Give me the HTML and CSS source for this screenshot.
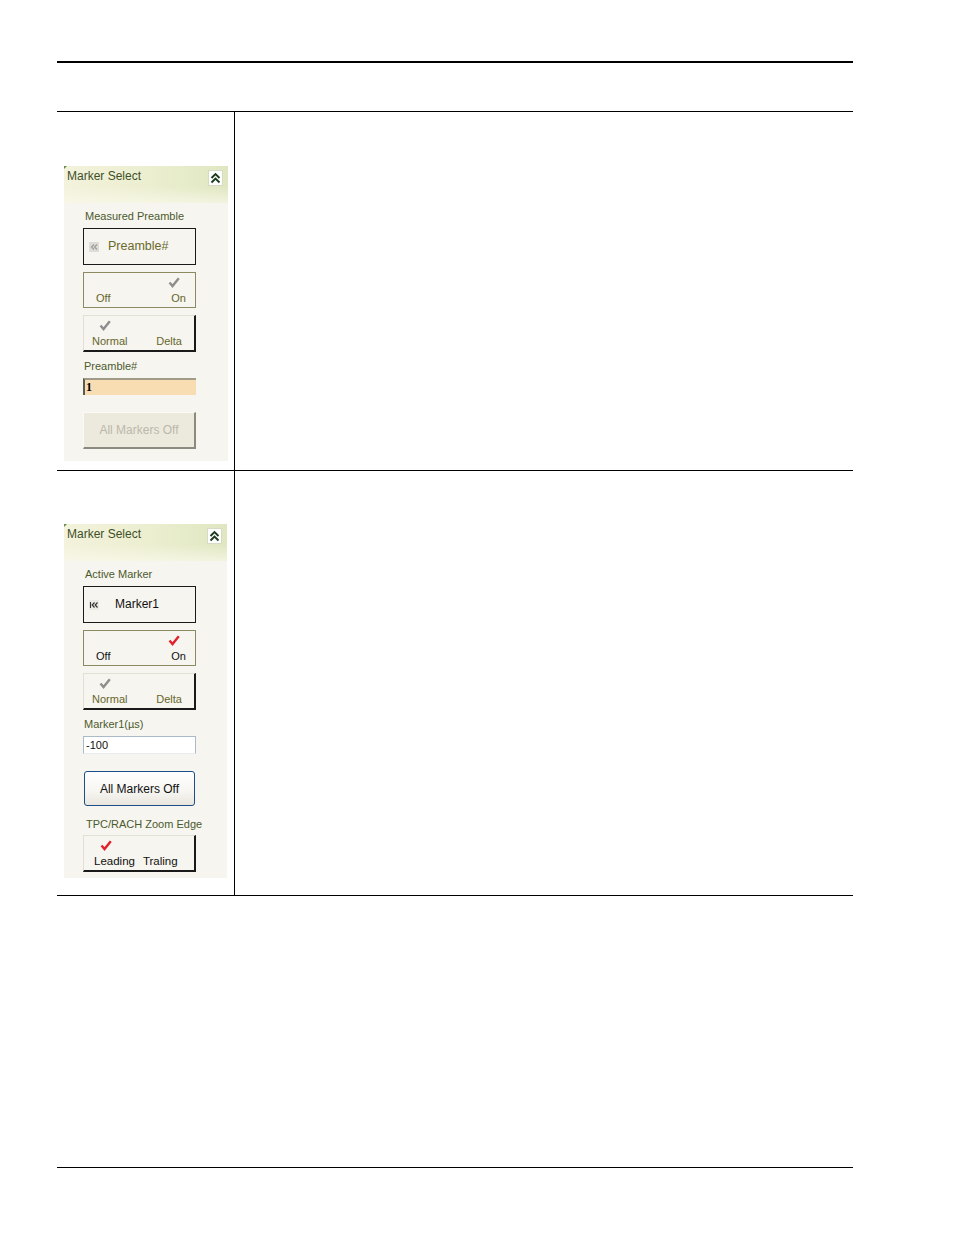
FILE: index.html
```html
<!DOCTYPE html>
<html>
<head>
<meta charset="utf-8">
<link rel="stylesheet" href="styles.css">
</head>
<body>
<div class="page">
  <div class="top-rule"></div>
  <div class="table">
    <div class="row row-1">
      <div class="cell-left">
        <div class="panel">
          <div class="panel-head">
            <span class="corner"></span>
            <span class="head-title">Marker Select</span>
            <span class="collapse">
              <svg width="13" height="14" viewBox="0 0 13 14"><polyline points="2.5,7 6.5,3 10.5,7" fill="none" stroke="#1e3a1e" stroke-width="1.9"/><polyline points="2.5,11.5 6.5,7.5 10.5,11.5" fill="none" stroke="#1e3a1e" stroke-width="1.9"/></svg>
            </span>
          </div>
          <div class="panel-body p1">
            <div class="label">Measured Preamble</div>
            <div class="sel-btn olive">
              <span class="sel-icon dim">
                <svg width="10" height="10" viewBox="0 0 10 10"><polyline points="5,2.5 2.5,5 5,7.5" fill="none" stroke="#9a9a9a" stroke-width="1.1"/><polyline points="8,2.5 5.5,5 8,7.5" fill="none" stroke="#9a9a9a" stroke-width="1.1"/></svg>
              </span>
              <span class="sel-text t1">Preamble#</span>
            </div>
            <div class="toggle flat olive">
              <div class="check-row right">
                <svg class="check" width="12" height="11" viewBox="0 0 12 11"><polyline points="1.5,5.5 4.5,9 10.8,1.2" fill="none" stroke="#8e8e8e" stroke-width="2.4"/></svg>
              </div>
              <div class="text-row a"><span>Off</span><span>On</span></div>
            </div>
            <div class="toggle raised olive">
              <div class="check-row left">
                <svg class="check" width="12" height="11" viewBox="0 0 12 11"><polyline points="1.5,5.5 4.5,9 10.8,1.2" fill="none" stroke="#8e8e8e" stroke-width="2.4"/></svg>
              </div>
              <div class="text-row b"><span>Normal</span><span>Delta</span></div>
            </div>
            <div class="label l2">Preamble#</div>
            <div class="input peach"><b>1</b></div>
            <div class="btn disabled">All Markers Off</div>
          </div>
        </div>
      </div>
      <div class="cell-right"></div>
    </div>
    <div class="row row-2">
      <div class="cell-left">
        <div class="panel">
          <div class="panel-head">
            <span class="corner"></span>
            <span class="head-title">Marker Select</span>
            <span class="collapse">
              <svg width="13" height="14" viewBox="0 0 13 14"><polyline points="2.5,7 6.5,3 10.5,7" fill="none" stroke="#1e3a1e" stroke-width="1.9"/><polyline points="2.5,11.5 6.5,7.5 10.5,11.5" fill="none" stroke="#1e3a1e" stroke-width="1.9"/></svg>
            </span>
          </div>
          <div class="panel-body p2">
            <div class="label">Active Marker</div>
            <div class="sel-btn dark">
              <span class="sel-icon">
                <svg width="10" height="10" viewBox="0 0 10 10"><line x1="1.5" y1="2" x2="1.5" y2="8" stroke="#333" stroke-width="1.1"/><polyline points="5.5,2.5 3.2,5 5.5,7.5" fill="none" stroke="#333" stroke-width="1.2"/><polyline points="8.5,2.5 6.2,5 8.5,7.5" fill="none" stroke="#333" stroke-width="1.2"/></svg>
              </span>
              <span class="sel-text t2">Marker1</span>
            </div>
            <div class="toggle flat dark">
              <div class="check-row right">
                <svg class="check" width="12" height="11" viewBox="0 0 12 11"><polyline points="1.5,5.5 4.5,9 10.8,1.2" fill="none" stroke="#e4202c" stroke-width="2.4"/></svg>
              </div>
              <div class="text-row a"><span>Off</span><span>On</span></div>
            </div>
            <div class="toggle raised olive">
              <div class="check-row left">
                <svg class="check" width="12" height="11" viewBox="0 0 12 11"><polyline points="1.5,5.5 4.5,9 10.8,1.2" fill="none" stroke="#8e8e8e" stroke-width="2.4"/></svg>
              </div>
              <div class="text-row b"><span>Normal</span><span>Delta</span></div>
            </div>
            <div class="label l2">Marker1(µs)</div>
            <div class="input white">-100</div>
            <div class="btn active">All Markers Off</div>
            <div class="label l3">TPC/RACH Zoom Edge</div>
            <div class="toggle raised dark edge">
              <div class="check-row left2">
                <svg class="check" width="12" height="11" viewBox="0 0 12 11"><polyline points="1.5,5.5 4.5,9 10.8,1.2" fill="none" stroke="#e4202c" stroke-width="2.4"/></svg>
              </div>
              <div class="text-row c"><span>Leading</span><span>Traling</span></div>
            </div>
          </div>
        </div>
      </div>
      <div class="cell-right"></div>
    </div>
  </div>
  <div class="foot-rule"></div>
</div>
</body>
</html>
```

FILE: styles.css
```css
* { box-sizing: border-box; }
html, body { margin: 0; padding: 0; background: #fff; }
body { width: 954px; height: 1235px; font-family: "Liberation Sans", Arial, sans-serif; }

.page { margin-left: 57px; width: 796px; padding-top: 61px; }
.top-rule { height: 2px; background: #000; }
.table { margin-top: 48px; border-top: 1px solid #000; }
.row { display: grid; grid-template-columns: 178px 1fr; border-bottom: 1px solid #000; }
.row-1 { height: 359px; }
.row-2 { height: 425px; }
.cell-left { border-right: 1px solid #000; padding-left: 7px; }
.row-1 .cell-left { padding-top: 54px; }
.row-2 .cell-left { padding-top: 53px; }
.foot-rule { margin-top: 271px; height: 1px; background: #000; }

.panel { width: 164px; background: #f6f5ef; }
.row-2 .panel { width: 163px; }
.panel-head {
  height: 37px;
  display: flex;
  align-items: flex-start;
  justify-content: space-between;
  padding: 3px 5px 0 3px;
  background: linear-gradient(to bottom, rgba(255,255,250,0) 55%, rgba(250,249,236,0.7) 100%),
              linear-gradient(to right, #f3f2dc 0%, #ebeecf 55%, #dfe7c1 100%);
  position: relative;
}
.corner {
  position: absolute; left: 0; top: 0;
  width: 0; height: 0;
  border-top: 3px solid #6a8a4a;
  border-right: 3px solid transparent;
}
.head-title { font-size: 12px; line-height: 15px; color: #3e4f28; }
.collapse {
  margin-top: 1px;
  width: 15px; height: 16px;
  background: #fff;
  border: 1px solid #d6dcc4;
  display: flex; align-items: center; justify-content: center;
}
.collapse svg { display: block; }

.panel-body { padding-left: 19px; display: flex; flex-direction: column; align-items: flex-start; }
.p1 { padding-bottom: 12px; }
.p2 { padding-bottom: 6px; }

.label { font-size: 11px; line-height: 14px; color: #4c5a2e; padding-left: 2px; margin-top: 6px; }
.label.l2 { margin-top: 7px; padding-left: 1px; }
.label.l3 { margin-top: 11px; padding-left: 3px; }

.sel-btn {
  margin-top: 5px;
  width: 113px; height: 37px;
  border: 1px solid #1a1a1a;
  display: flex; align-items: center;
  padding-left: 5px;
}
.sel-icon {
  width: 10px; height: 10px;
  background: #dedcd6;
  display: flex;
}
.sel-icon svg { display: block; }
.sel-btn.dark .sel-icon { background: #eceae2; }
.sel-text { font-size: 12px; line-height: 15px; }
.sel-text.t1 { margin-left: 9px; color: #6a6a2c; font-size: 12.5px; }
.sel-text.t2 { margin-left: 16px; color: #111; }

.toggle {
  margin-top: 7px;
  width: 113px;
  display: flex; flex-direction: column;
  padding-top: 4px;
  font-size: 11px;
}
.toggle.flat { height: 36px; border: 1px solid #8c8a62; }
.toggle.raised {
  height: 37px;
  border-top: 1px solid #e2e0d4;
  border-left: 1px solid #e2e0d4;
  border-right: 2px solid #1a1a1a;
  border-bottom: 2px solid #1a1a1a;
}
.toggle.edge { margin-top: 4px; }
.olive { color: #66662c; }
.dark { color: #111; }
.check-row { height: 11px; display: flex; }
.check-row.right { justify-content: flex-end; padding-right: 15px; }
.check-row.left { padding-left: 15px; }
.check-row.left2 { padding-left: 16px; }
.check { display: block; }
.text-row { margin-top: 4px; line-height: 13px; display: flex; }
.text-row.a { justify-content: space-between; padding: 0 9px 0 12px; }
.text-row.b { justify-content: space-between; padding: 0 12px 0 8px; }
.text-row.c { padding-left: 10px; gap: 8px; font-size: 11.5px; }

.input {
  margin-top: 5px;
  width: 113px;
  font-size: 11px;
  display: flex; align-items: center;
  padding-left: 1px;
}
.input.peach {
  height: 17px;
  background: #f8dcb2;
  border-top: 2px solid #a09a88;
  border-left: 2px solid #5a5a52;
  color: #000;
  font-family: "Liberation Serif", serif;
  font-size: 12px;
}
.input.white {
  height: 18px;
  background: #fff;
  border: 1px solid #aabac8;
  border-bottom-color: #e8ecf0;
  color: #111;
  padding-left: 2px;
}

.btn {
  margin-top: 17px;
  display: flex; align-items: center; justify-content: center;
  font-size: 12px;
}
.btn.disabled {
  width: 113px; height: 37px;
  background: #ece9dd;
  color: #bcb8aa;
  border-top: 1px solid #fbfaf6;
  border-left: 1px solid #fbfaf6;
  border-right: 2px solid #8c8a80;
  border-bottom: 2px solid #8c8a80;
}
.btn.active {
  width: 111px; height: 35px;
  margin-left: 1px;
  background: linear-gradient(to bottom, #ffffff 0%, #f6f5f1 60%, #e9e6dd 100%);
  border: 1px solid #1d4e89;
  border-radius: 3px;
  color: #111;
}
```
